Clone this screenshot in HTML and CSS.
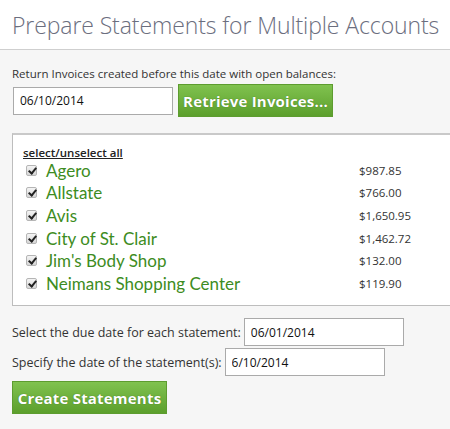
FILE: index.html
```html
<!DOCTYPE html>
<html>
<head>
<meta charset="utf-8">
<link rel="stylesheet" href="styles.css">
</head>
<body>
<header class="page-header">
  <h1 class="title">Prepare Statements for Multiple Accounts</h1>
</header>
<main class="content">
  <p class="label">Return Invoices created before this date with open balances:</p>
  <div class="retrieve-row">
    <input class="field field-wide" type="text" value="06/10/2014">
    <button class="btn btn-retrieve">Retrieve Invoices...</button>
  </div>
  <section class="accounts">
    <a class="select-all">select/unselect all</a>
    <ul class="account-list">
      <li class="account"><span class="check"></span><span class="name">Agero</span><span class="amount">$987.85</span></li>
      <li class="account"><span class="check"></span><span class="name">Allstate</span><span class="amount">$766.00</span></li>
      <li class="account"><span class="check"></span><span class="name">Avis</span><span class="amount">$1,650.95</span></li>
      <li class="account"><span class="check"></span><span class="name">City of St. Clair</span><span class="amount">$1,462.72</span></li>
      <li class="account"><span class="check"></span><span class="name">Jim's Body Shop</span><span class="amount">$132.00</span></li>
      <li class="account"><span class="check"></span><span class="name">Neimans Shopping Center</span><span class="amount">$119.90</span></li>
    </ul>
  </section>
  <div class="statement-form">
    <div class="form-row">
      <span class="label-inline">Select the due date for each statement:</span>
      <input class="field" type="text" value="06/01/2014">
    </div>
    <div class="form-row">
      <span class="label-inline">Specify the date of the statement(s):</span>
      <input class="field" type="text" value="6/10/2014">
    </div>
    <button class="btn btn-create">Create Statements</button>
  </div>
</main>
</body>
</html>
```
FILE: styles.css
```css
html, body {
  margin: 0;
  padding: 0;
  background: #f6f6f6;
  overflow: hidden;
}
body {
  font-family: "Open Sans", "Liberation Sans", sans-serif;
  color: #333;
  width: 450px;
  height: 429px;
}
.page-header {
  background: #fff;
  height: 50px;
  border-bottom: 1px solid #cfcfcf;
  box-sizing: border-box;
  padding: 10px 0 0 12px;
}
.title {
  margin: 0;
  font-weight: 300;
  font-size: 23px;
  letter-spacing: -0.1px;
  line-height: 30px;
  color: #6b6e7e;
  white-space: nowrap;
}
.content {
  padding: 16px 0 0 12px;
}
.label {
  margin: 0;
  font-size: 11.5px;
  line-height: 16px;
  color: #333;
}
.retrieve-row {
  display: flex;
  align-items: center;
  gap: 5px;
  margin-top: 2px;
}
.field {
  box-sizing: border-box;
  width: 160px;
  height: 28px;
  border: 1px solid #aaa;
  background: #fff;
  font-family: "Open Sans", sans-serif;
  font-size: 12px;
  color: #111;
  padding: 0 6px;
  margin: 0;
  outline: none;
}
.field-wide {
  margin-left: 1px;
}
.btn {
  box-sizing: border-box;
  height: 33px;
  border: 1px solid #5d9c2f;
  background: linear-gradient(#80c24f, #5c9f2c);
  color: #fff;
  font-family: "Open Sans", sans-serif;
  font-weight: bold;
  font-size: 15px;
  letter-spacing: 0.2px;
  white-space: nowrap;
  text-shadow: 0 0 1px #3b6d1a;
  padding: 0;
  margin: 0;
}
.btn-retrieve {
  width: 155px;
}
.accounts {
  margin-top: 16px;
  background: #fff;
  border: 1px solid #bdbdbd;
  border-top: 2px solid #c9c9c9;
  border-right: none;
  height: 173px;
  box-sizing: border-box;
  padding: 10px 0 0 10px;
}
.select-all {
  display: block;
  font-size: 11.5px;
  line-height: 16px;
  color: #222;
  text-decoration: underline;
  font-weight: 600;
}
.account-list {
  list-style: none;
  margin: -2px 0 0;
  padding: 0;
}
.account {
  display: flex;
  align-items: center;
  height: 22.6px;
}
.check {
  box-sizing: border-box;
  width: 11px;
  height: 11px;
  margin-left: 3px;
  border: 1px solid #b5b5b5;
  border-radius: 2px;
  background: linear-gradient(#f4f4f4, #d6d6d6);
  position: relative;
}
.check::after {
  content: "";
  position: absolute;
  left: 3px;
  top: 0px;
  width: 3px;
  height: 6px;
  border: solid #222;
  border-width: 0 2px 2px 0;
  transform: rotate(40deg);
}
.name {
  margin-left: 9px;
  width: 313px;
  font-family: "Lato", "Open Sans", sans-serif;
  font-size: 17px;
  color: #3d8c22;
}
.amount {
  font-size: 11.5px;
  color: #333;
}
.statement-form {
  margin-top: 10px;
  display: flex;
  flex-direction: column;
  align-items: flex-start;
}
.form-row {
  display: flex;
  align-items: center;
  gap: 3px;
  height: 32px;
  margin-top: -2px;
}
.form-row:first-child {
  margin-top: 0;
}
.label-inline {
  font-size: 12.5px;
  color: #333;
}
.btn-create {
  margin-top: 3px;
  width: 155px;
}
```
